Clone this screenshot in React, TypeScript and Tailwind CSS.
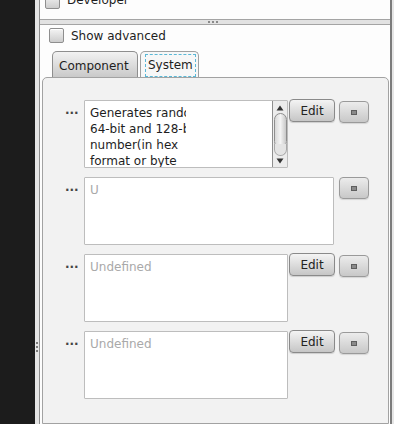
const FONT = { fontFamily: '"DejaVu Sans", Verdana, sans-serif' }

const DESC = ['Generates random', '64-bit and 128-bit', 'number(in hex', 'format or byte']

export default function App() {
  return (
    <div className="flex h-[424px] w-[394px] overflow-hidden bg-[#1c1c1c] text-[12px] leading-[16px] text-[#1e1e1e]" style={FONT}>
      <div className="w-[35px] shrink-0 bg-[#1c1c1c]" />
      {/* splitter */}
      <div className="flex w-[5px] shrink-0 flex-col items-center border-r border-[#8c8c8c] bg-[#e4e4e4] pt-[342px]">
        <div className="flex flex-col gap-[2px]">
          <span className="h-[2px] w-[2px] bg-[#7a7a7a]" />
          <span className="h-[2px] w-[2px] bg-[#7a7a7a]" />
          <span className="h-[2px] w-[2px] bg-[#7a7a7a]" />
        </div>
      </div>

      <div className="flex min-w-0 flex-1 flex-col bg-[#fdfdfd]">
        {/* clipped top row */}
        <div className="h-[19px] overflow-hidden">
          <div className="-mt-[6px] ml-[5px] flex items-center gap-[7px]">
            <Check />
            <span className="-mt-[3px]">Developer</span>
          </div>
        </div>

        {/* divider */}
        <div className="flex h-[6px] items-center justify-center border-y border-[#a4a4a4] bg-[#e2e2e2] pr-[4px]">
          <div className="flex gap-[2px]">
            <span className="h-[2px] w-[2px] bg-[#8a8a8a]" />
            <span className="h-[2px] w-[2px] bg-[#8a8a8a]" />
            <span className="h-[2px] w-[2px] bg-[#8a8a8a]" />
          </div>
        </div>

        <div className="ml-[9px] mt-[3px] flex h-[15px] items-center gap-[7px]">
          <Check />
          <span>Show advanced</span>
        </div>

        {/* tabs */}
        <div className="ml-[12px] mt-[8px] flex h-[26px] items-end gap-[2px]">
          <div className="flex h-[26px] w-[86px] items-center rounded-t-[5px] border border-b-0 border-[#8e8e8e] bg-gradient-to-b from-[#f2f2f2] to-[#c9c9c9] pl-[6px] pt-[2px]">
            Component
          </div>
          <div className="flex h-[26px] w-[59px] items-center rounded-t-[5px] border border-b-0 border-[#a0a0a0] bg-[#f7f7f7] pl-[4px] pt-[1px]">
            <span className="border border-dashed border-[#5bb8d6] px-[2px] pt-[2px] pb-[3px]">System</span>
          </div>
        </div>

        {/* panel */}
        <div className="ml-[2px] mr-[1px] flex flex-1 flex-col gap-[9px] rounded-t-[5px] border border-[#a2a2a2] bg-[#f2f2f2] pl-[21px] pt-[22px]">
          <Row edit>
            <div className="flex h-[68px] w-[204px] overflow-hidden rounded-[1px] border border-[#bdbdbd] bg-white">
              <div className="flex-1">
                <div className="w-[101px] overflow-hidden whitespace-nowrap pl-[5px] pt-[4px]">
                  {DESC.map(l => (
                    <div key={l}>{l}</div>
                  ))}
                </div>
              </div>
              <Scrollbar />
            </div>
          </Row>
          <Row>
            <Box width="w-[250px]" text="U" />
          </Row>
          <Row edit>
            <Box width="w-[204px]" text="Undefined" />
          </Row>
          <Row edit>
            <Box width="w-[204px]" text="Undefined" />
          </Row>
        </div>
      </div>

      <div className="w-[2px] shrink-0 bg-[#7c7c7c]" />
      <div className="w-[2px] shrink-0 bg-[#e6e6e6]" />
    </div>
  )
}

function Check() {
  return (
    <span className="h-[15px] w-[15px] shrink-0 rounded-[2px] border border-[#8e8e8e] bg-gradient-to-b from-[#f4f4f4] to-[#cdcdcd] shadow-[inset_0_1px_0_#fff]" />
  )
}

function Row({ edit, children }: { edit?: boolean; children: React.ReactNode }) {
  return (
    <div className="flex items-start">
      <span className="mt-[2px] w-[20px] pl-[1px] font-bold text-[#444]">...</span>
      {children}
      {edit ? (
        <>
          <button className="-mt-[1px] ml-[1px] flex h-[23px] w-[46px] items-center justify-center rounded-[4px] border border-[#8a8a8a] bg-gradient-to-b from-[#f4f4f4] to-[#c6c6c6] text-[#222] shadow-[0_1px_1px_rgba(0,0,0,0.15)]">
            Edit
          </button>
          <SmallButton className="ml-[4px] mt-[1px]" />
        </>
      ) : (
        <SmallButton className="ml-[5px]" />
      )}
    </div>
  )
}

function SmallButton({ className }: { className: string }) {
  return (
    <button className={`${className} flex h-[22px] w-[30px] items-center justify-center rounded-[4px] border border-[#9a9a9a] bg-gradient-to-b from-[#ececec] to-[#c8c8c8] shadow-[0_1px_1px_rgba(0,0,0,0.12)]`}>
      <span className="h-[5px] w-[6px] border border-[#5e5e5e] bg-[#8a8a8a]" />
    </button>
  )
}

function Box({ width, text }: { width: string; text: string }) {
  return (
    <div className={`${width} h-[68px] overflow-hidden rounded-[1px] border border-[#bdbdbd] bg-white pl-[5px] pt-[4px] text-[#a9a9a9]`}>
      {text}
    </div>
  )
}

function Scrollbar() {
  return (
    <div className="flex w-[15px] flex-col items-center border-l border-[#8e8e8e] bg-[#ececec]">
      <svg width="8" height="6" viewBox="0 0 8 6" className="mt-[4px]">
        <path d="M4 0.5 L7.5 5.5 L0.5 5.5 Z" fill="#333" />
      </svg>
      <div className="mt-[2px] h-[35px] w-[13px] rounded-full border border-[#8e8e8e] bg-gradient-to-r from-[#d8d8d8] via-[#f4f4f4] to-[#c8c8c8]" />
      <div className="-mt-[4px] h-[12px] w-[13px] rounded-b-full border border-t-0 border-[#a8a8a8] bg-[#e4e4e4]" />
      <svg width="8" height="6" viewBox="0 0 8 6" className="mt-auto mb-[3px]">
        <path d="M0.5 0.5 L7.5 0.5 L4 5.5 Z" fill="#333" />
      </svg>
    </div>
  )
}
